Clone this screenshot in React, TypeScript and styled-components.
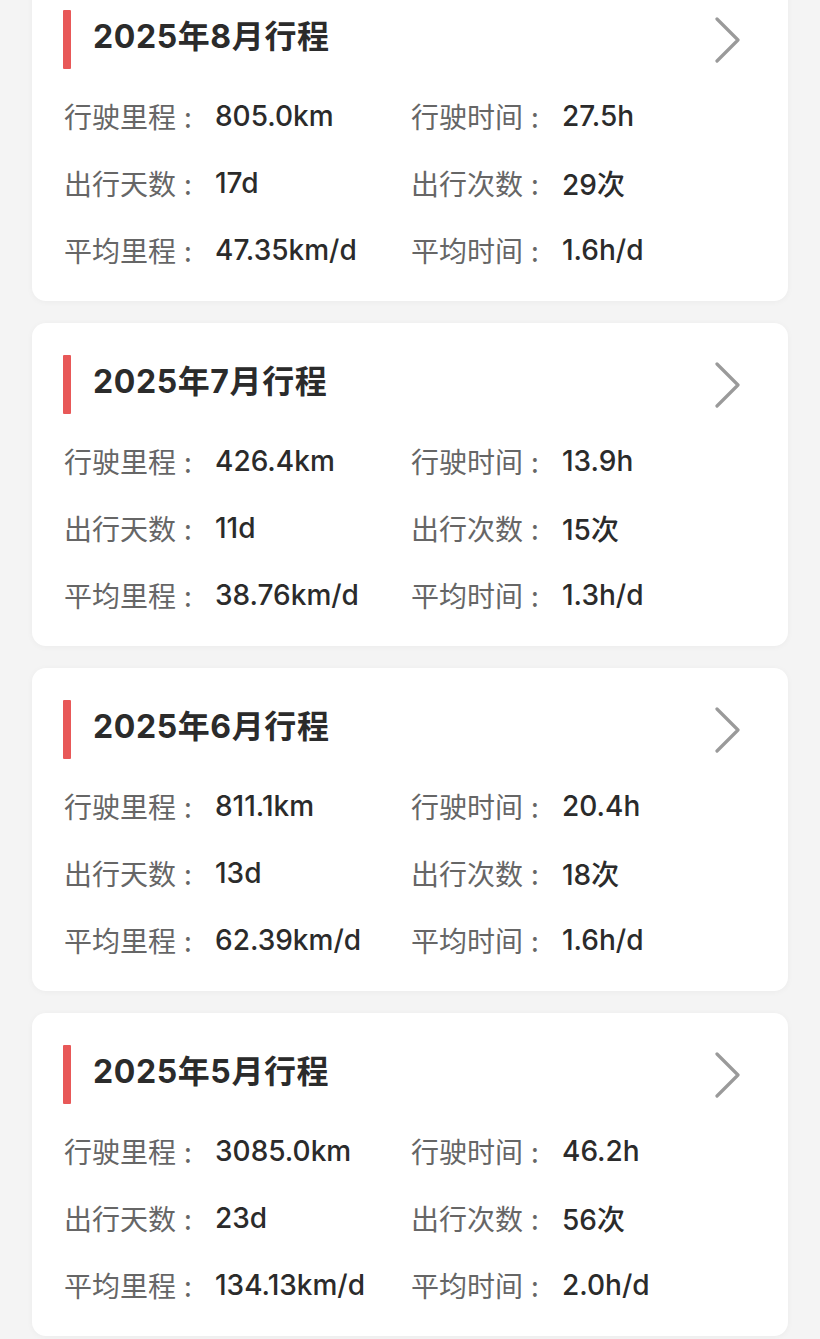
import React from "react";
import styled, { createGlobalStyle } from "styled-components";

const GlobalStyle = createGlobalStyle`
    html, body {
        margin: 0;
        padding: 0;
        background: #f4f4f4;
    }
    body {
        font-family: Inter, "Noto Sans CJK SC", sans-serif;
        -webkit-font-smoothing: antialiased;
    }
`;

const Page = styled.div`
    display: flex;
    flex-direction: column;
    gap: 22px;
    padding: 0 32px 22px;
    margin-top: -22px;
`;

const Card = styled.div`
    flex: 0 0 auto;
    height: 323px;
    box-sizing: border-box;
    background: #fff;
    border-radius: 14px;
    box-shadow: 0 1px 6px rgba(0, 0, 0, 0.04);
    padding: 32px 48px 19px 32px;
    display: flex;
    flex-direction: column;
`;

const TitleRow = styled.div`
    display: flex;
    align-items: center;
    height: 59px;
    margin-bottom: 13px;
`;

const Bar = styled.div`
    width: 8px;
    height: 59px;
    border-radius: 1px;
    background: #e85858;
    margin-left: -1px;
    margin-right: 22px;
`;

const Title = styled.div`
    flex: 1;
    font-family: Inter, "Noto Sans CJK SC", sans-serif;
    font-size: 32px;
    line-height: 40px;
    font-weight: 700;
    color: #2b2b2b;
    letter-spacing: 0.6px;
    padding-bottom: 6px;
`;

const Chevron = styled.svg`
    width: 26px;
    height: 48px;
    display: block;
`;

const Grid = styled.div`
    display: grid;
    grid-template-columns: 347px 1fr;
    grid-auto-rows: 67px;
`;

const Stat = styled.div`
    display: flex;
    align-items: center;
`;

const Label = styled.span`
    width: 151px;
    flex: 0 0 151px;
    font-family: "Noto Sans CJK SC", sans-serif;
    font-size: 28px;
    font-weight: 400;
    color: #666;

    &::after {
        content: ":";
        margin-left: 8px;
    }
`;

const Value = styled.span`
    font-family: Inter, "Noto Sans CJK SC", sans-serif;
    font-size: 28px;
    font-weight: 500;
    color: #2b2b2b;
`;

type Trip = {
    month: number;
    distance: string;
    duration: string;
    days: string;
    trips: string;
    avgDistance: string;
    avgDuration: string;
};

const trips: Trip[] = [
    { month: 8, distance: "805.0km", duration: "27.5h", days: "17d", trips: "29次", avgDistance: "47.35km/d", avgDuration: "1.6h/d" },
    { month: 7, distance: "426.4km", duration: "13.9h", days: "11d", trips: "15次", avgDistance: "38.76km/d", avgDuration: "1.3h/d" },
    { month: 6, distance: "811.1km", duration: "20.4h", days: "13d", trips: "18次", avgDistance: "62.39km/d", avgDuration: "1.6h/d" },
    { month: 5, distance: "3085.0km", duration: "46.2h", days: "23d", trips: "56次", avgDistance: "134.13km/d", avgDuration: "2.0h/d" },
];

const TripCard: React.FC<{ trip: Trip }> = ({ trip }) => (
    <Card>
        <TitleRow>
            <Bar />
            <Title>2025年{trip.month}月行程</Title>
            <Chevron viewBox="0 0 26 48">
                <polyline
                    points="3,3 24,24 3,45"
                    fill="none"
                    stroke="#9a9a9a"
                    strokeWidth="3.2"
                    strokeLinecap="round"
                    strokeLinejoin="round"
                />
            </Chevron>
        </TitleRow>
        <Grid>
            <Stat>
                <Label>行驶里程</Label>
                <Value>{trip.distance}</Value>
            </Stat>
            <Stat>
                <Label>行驶时间</Label>
                <Value>{trip.duration}</Value>
            </Stat>
            <Stat>
                <Label>出行天数</Label>
                <Value>{trip.days}</Value>
            </Stat>
            <Stat>
                <Label>出行次数</Label>
                <Value>{trip.trips}</Value>
            </Stat>
            <Stat>
                <Label>平均里程</Label>
                <Value>{trip.avgDistance}</Value>
            </Stat>
            <Stat>
                <Label>平均时间</Label>
                <Value>{trip.avgDuration}</Value>
            </Stat>
        </Grid>
    </Card>
);

const App: React.FC = () => (
    <>
        <GlobalStyle />
        <Page>
            {trips.map((t) => (
                <TripCard key={t.month} trip={t} />
            ))}
        </Page>
    </>
);

export default App;
